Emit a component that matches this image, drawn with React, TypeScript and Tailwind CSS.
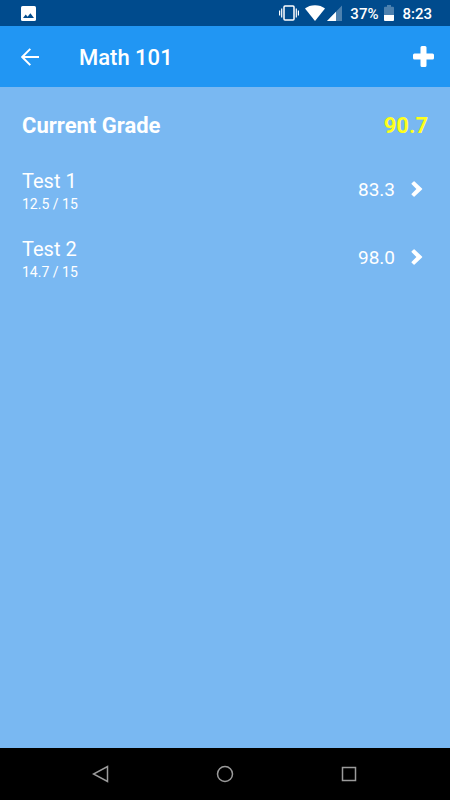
import type { ReactNode } from "react";

const tests = [
  { name: "Test 1", points: "12.5 / 15", grade: "83.3" },
  { name: "Test 2", points: "14.7 / 15", grade: "98.0" },
];

function StatusBar() {
  return (
    <div className="flex h-[26px] shrink-0 items-center justify-between bg-[#004b8d] pr-[18px] pl-[21px] text-[15px] leading-5 font-medium">
      <svg width="15" height="15" viewBox="0 0 15 15">
        <rect width="15" height="15" rx="1.6" fill="#fff" />
        <path d="M2 12l2.700-3.500 1.900 2.200 2.800-3.500L13 12z" fill="#004b8d" />
      </svg>
      <div className="flex items-center">
        <svg width="20" height="16" viewBox="0 0 20 16" fill="none" stroke="#fff">
          <rect x="5" y="1" width="10" height="14" rx="1" strokeWidth="1.5" />
          <path d="M2.700 3.500v9M.600 5.500v5M17.300 3.500v9M19.400 5.500v5" strokeWidth="1.2" />
        </svg>
        <svg className="ml-1.5" width="20" height="16" viewBox="0 0 20 16" fill="#fff">
          <path d="M10 16L0 3.600C2.600 1.400 6 .200 10 .200s7.400 1.200 10 3.400z" />
        </svg>
        <svg className="ml-0.5" width="15" height="16" viewBox="0 0 15 16" fill="#fff">
          <path d="M15 .500V16H0z" fillOpacity=".3" />
          <path d="M9 6.700V16H0z" />
        </svg>
        <span className="ml-2 pt-0.5">37%</span>
        <svg className="ml-1.5" width="10" height="16" viewBox="0 0 10 16" fill="#fff">
          <path d="M3 0h4v1.700h2q1 0 1 1V10H0V2.700q0-1 1-1h2z" fillOpacity=".3" />
          <path d="M0 10h10v5q0 1-1 1H1q-1 0-1-1z" />
        </svg>
        <span className="ml-2 pt-0.5">8:23</span>
      </div>
    </div>
  );
}

function Header() {
  return (
    <header className="flex h-[61px] shrink-0 items-center bg-[#2196f3] pr-4 pl-[21px]">
      <button aria-label="Back">
        <svg width="18" height="18" viewBox="0 0 18 18" fill="none" stroke="#fff" strokeWidth="2">
          <path d="M18 9H1.500M9.300.900L1.200 9l8.100 8.100" />
        </svg>
      </button>
      <h1 className="ml-10 flex-1 pt-0.5 text-[22px] leading-7 font-medium">Math 101</h1>
      <button aria-label="Add test">
        <svg width="21" height="21" viewBox="0 0 21 21" fill="#fff">
          <path d="M9 0h3q1.500 0 1.500 1.500v6h6q1.500 0 1.500 1.500v3q0 1.500-1.500 1.500h-6v6q0 1.500-1.500 1.500H9q-1.500 0-1.500-1.500v-6h-6Q0 13.500 0 12V9q0-1.500 1.500-1.500h6v-6Q7.500 0 9 0z" />
        </svg>
      </button>
    </header>
  );
}

function TestRow({ name, points, grade }: { name: string; points: string; grade: string }) {
  return (
    <li>
      <button className="flex h-[68px] w-full items-center pr-[27px] pl-[22px] text-left">
        <span className="flex flex-1 flex-col pt-1">
          <span className="text-xl leading-6">{name}</span>
          <span className="text-sm leading-[22px]">{points}</span>
        </span>
        <span className="text-[19px] leading-6">{grade}</span>
        <svg className="ml-4" width="12" height="18" viewBox="0 0 12 18" fill="#fff">
          <path d="M.700 2.300L2.600.400q.500-.500 1 0L11 7.500q.500.500 0 1L3.600 15.600q-.500.500-1 0L.700 13.700q-.500-.500 0-1L5.400 8 .700 3.300q-.500-.500 0-1z" />
        </svg>
      </button>
    </li>
  );
}

function NavButton({ label, children }: { label: string; children: ReactNode }) {
  return (
    <button aria-label={label} className="flex h-full w-[124px] items-center justify-center">
      <svg width="18" height="18" viewBox="0 0 18 18" fill="none" stroke="#9b9b9b" strokeWidth="1.5">
        {children}
      </svg>
    </button>
  );
}

export default function App() {
  return (
    <div className="flex min-h-screen flex-col bg-[#79b8f2] font-[Roboto,sans-serif] text-white">
      <StatusBar />
      <Header />
      <main className="flex-1 pt-2">
        <div className="flex h-[61px] items-center justify-between px-[22px] text-[22px] leading-7 font-bold">
          <h2>Current Grade</h2>
          <span className="text-[#ffff1a]">90.7</span>
        </div>
        <ul>
          {tests.map((test) => (
            <TestRow key={test.name} {...test} />
          ))}
        </ul>
      </main>
      <nav className="flex h-[52px] shrink-0 justify-center bg-black">
        <NavButton label="Back">
          <path d="M15.500 1.500v15L1.500 9z" />
        </NavButton>
        <NavButton label="Home">
          <circle cx="9" cy="9" r="7.500" />
        </NavButton>
        <NavButton label="Recent apps">
          <rect x="2.500" y="2.500" width="13" height="13" />
        </NavButton>
      </nav>
    </div>
  );
}
